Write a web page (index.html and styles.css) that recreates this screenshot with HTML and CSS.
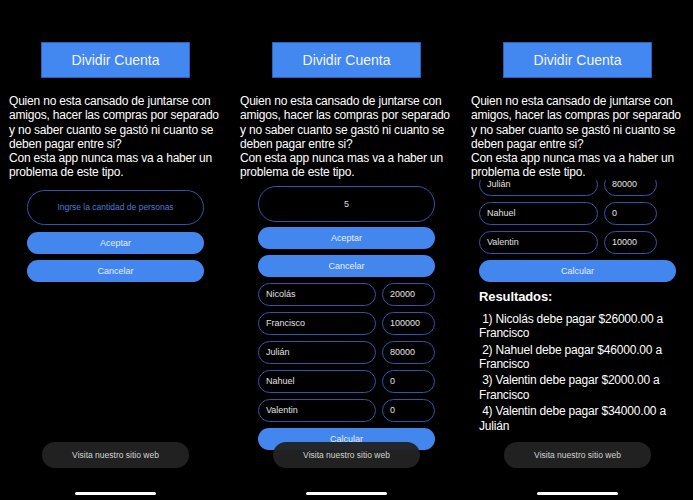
FILE: index.html
```html
<!DOCTYPE html>
<html lang="es">
<head>
<meta charset="utf-8">
<title>Dividir Cuenta</title>
<link rel="stylesheet" href="styles.css">
</head>
<body>
<div class="screens">
  <section class="phone phone--start">
    <div class="title">Dividir Cuenta</div>
    <p class="desc">Quien no esta cansado de juntarse con amigos, hacer las compras por separado y no saber cuanto se gastó ni cuanto se deben pagar entre si?<br>Con esta app nunca mas va a haber un problema de este tipo.</p>
    <div class="scroll">
      <div class="content">
        <div class="count count--placeholder">Ingrse la cantidad de personas</div>
        <div class="btn">Aceptar</div>
        <div class="btn">Cancelar</div>
      </div>
    </div>
    <div class="visit">Visita nuestro sitio web</div>
    <div class="home"></div>
  </section>

  <section class="phone phone--form">
    <div class="title">Dividir Cuenta</div>
    <p class="desc">Quien no esta cansado de juntarse con amigos, hacer las compras por separado y no saber cuanto se gastó ni cuanto se deben pagar entre si?<br>Con esta app nunca mas va a haber un problema de este tipo.</p>
    <div class="scroll">
      <div class="content">
        <div class="count">5</div>
        <div class="btn">Aceptar</div>
        <div class="btn">Cancelar</div>
        <div class="row"><div class="field field--name">Nicolás</div><div class="field field--amount">20000</div></div>
        <div class="row"><div class="field field--name">Francisco</div><div class="field field--amount">100000</div></div>
        <div class="row"><div class="field field--name">Julián</div><div class="field field--amount">80000</div></div>
        <div class="row"><div class="field field--name">Nahuel</div><div class="field field--amount">0</div></div>
        <div class="row"><div class="field field--name">Valentin</div><div class="field field--amount">0</div></div>
        <div class="btn">Calcular</div>
      </div>
    </div>
    <div class="visit">Visita nuestro sitio web</div>
    <div class="home"></div>
  </section>

  <section class="phone phone--results">
    <div class="title">Dividir Cuenta</div>
    <p class="desc">Quien no esta cansado de juntarse con amigos, hacer las compras por separado y no saber cuanto se gastó ni cuanto se deben pagar entre si?<br>Con esta app nunca mas va a haber un problema de este tipo.</p>
    <div class="scroll">
      <div class="content">
        <div class="row"><div class="field field--name">Julián</div><div class="field field--amount">80000</div></div>
        <div class="row"><div class="field field--name">Nahuel</div><div class="field field--amount">0</div></div>
        <div class="row"><div class="field field--name">Valentin</div><div class="field field--amount">10000</div></div>
        <div class="btn btn--wide">Calcular</div>
        <div class="results">
          <h2 class="results-title">Resultados:</h2>
          <p class="result">&nbsp;1) Nicolás debe pagar $26000.00 a Francisco</p>
          <p class="result">&nbsp;2) Nahuel debe pagar $46000.00 a Francisco</p>
          <p class="result">&nbsp;3) Valentin debe pagar $2000.00 a Francisco</p>
          <p class="result">&nbsp;4) Valentin debe pagar $34000.00 a Julián</p>
        </div>
      </div>
    </div>
    <div class="visit">Visita nuestro sitio web</div>
    <div class="home"></div>
  </section>
</div>
</body>
</html>
```

FILE: styles.css
```css
* { box-sizing: border-box; }

html, body {
  margin: 0;
  padding: 0;
  background: #000;
}

body {
  font-family: "Liberation Sans", Arial, sans-serif;
  color: #fff;
}

.screens {
  display: flex;
  width: 693px;
  height: 500px;
}

.phone {
  position: relative;
  width: 231px;
  height: 500px;
  overflow: hidden;
  display: flex;
  flex-direction: column;
  padding-top: 42px;
}

.title {
  align-self: center;
  width: 149px;
  height: 36px;
  background: #4387f0;
  border: 1px solid #2c5fb8;
  display: flex;
  align-items: center;
  justify-content: center;
  font-size: 14px;
  color: #f2f6ff;
}

.desc {
  margin: 16px 0 0;
  padding: 0 6px 0 9px;
  font-size: 12px;
  line-height: 14.3px;
  letter-spacing: -0.2px;
}

.scroll {
  flex: 1;
  overflow: hidden;
}

.content {
  display: flex;
  flex-direction: column;
  gap: 6px;
  padding: 0 27px;
}

.phone--start .content { padding-top: 10px; }
.phone--form .content { padding-top: 6px; }
.phone--results .content {
  margin-top: -7px;
  padding: 0 17px;
}

.count {
  height: 36px;
  border: 1px solid #2a58ac;
  border-radius: 18px;
  display: flex;
  align-items: center;
  justify-content: center;
  font-size: 9px;
  color: #ddd;
}

.count--placeholder {
  color: #4a7dd4;
  font-size: 8.5px;
}

.phone--start .count { height: 35px; margin-bottom: 1px; }
.phone--form .count { margin-bottom: -1px; }

.btn {
  height: 22px;
  border-radius: 11px;
  background: #4387ee;
  display: flex;
  align-items: center;
  justify-content: center;
  font-size: 9px;
  color: #e6eeff;
}

.btn--wide {
  width: 197px;
}

.row {
  display: flex;
  gap: 6px;
}

.field {
  height: 23px;
  border: 1px solid #2a58ac;
  border-radius: 12px;
  display: flex;
  align-items: center;
  padding-left: 7px;
  font-size: 9px;
  color: #e2e2e2;
}

.field--name { width: 118px; }
.field--amount { width: 53px; }

.phone--results .field--name { width: 119px; }

.results {
  display: flex;
  flex-direction: column;
  gap: 2px;
  padding-right: 8px;
}

.results-title {
  margin: 0 0 4px;
  font-size: 13px;
  line-height: 18px;
  font-weight: 700;
  letter-spacing: -0.1px;
}

.result {
  margin: 0;
  font-size: 12px;
  line-height: 14.4px;
  letter-spacing: -0.2px;
}

.visit {
  position: absolute;
  left: 42px;
  bottom: 32px;
  width: 147px;
  height: 26px;
  border-radius: 13px;
  background: rgba(34, 34, 34, 0.96);
  display: flex;
  align-items: center;
  justify-content: center;
  font-size: 8.5px;
  color: #d4d4d4;
}

.home {
  position: absolute;
  left: 75px;
  bottom: 5px;
  width: 81px;
  height: 3px;
  border-radius: 2px;
  background: #fff;
}
```
